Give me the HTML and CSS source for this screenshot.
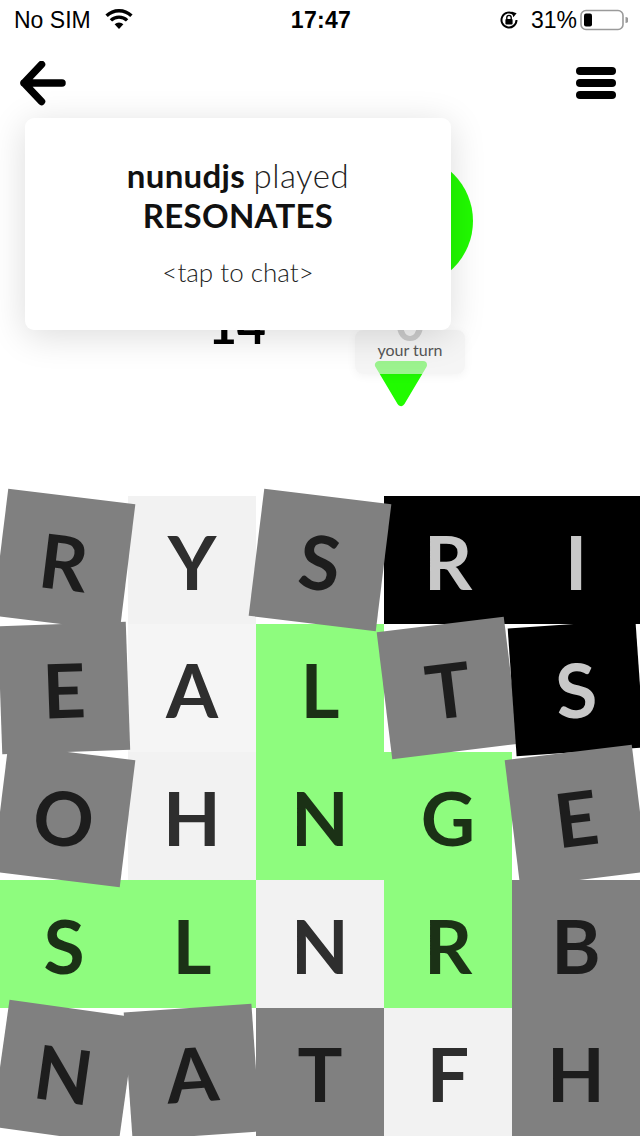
FILE: index.html
```html
<!DOCTYPE html>
<html lang="en">
<head>
<meta charset="utf-8">
<title>Word game</title>
<link rel="stylesheet" href="styles.css">
</head>
<body>
<div class="screen">
  <div class="status">
    <div class="st-left">
      <span>No SIM</span>
      <svg class="wifi" width="30" height="22" viewBox="0 0 30 22">
        <path d="M15 21 L10.6 16.2 A6.5 6.5 0 0 1 19.4 16.2 Z" fill="#000"/>
        <path d="M6.9 12.4 A11.6 11.6 0 0 1 23.1 12.4" fill="none" stroke="#000" stroke-width="3.4"/>
        <path d="M2.6 7.8 A17.6 17.6 0 0 1 27.4 7.8" fill="none" stroke="#000" stroke-width="3.4"/>
      </svg>
    </div>
    <div class="st-time">17:47</div>
    <div class="st-right">
      <svg class="rotlock" width="22" height="22" viewBox="0 0 22 22">
        <path d="M18.5 11 A7.5 7.5 0 1 1 15.8 5.2" fill="none" stroke="#000" stroke-width="2"/>
        <path d="M13.6 2.6 L18.6 4.2 L15.4 8.2 Z" fill="#000"/>
        <rect x="7.4" y="10" width="7.2" height="5.6" rx="1" fill="#000"/>
        <path d="M8.8 10 V8.6 A2.2 2.2 0 0 1 13.2 8.6 V10" fill="none" stroke="#000" stroke-width="1.4"/>
      </svg>
      <span class="pct">31%</span>
      <svg class="battery" width="48" height="22" viewBox="0 0 48 22">
        <rect x="1" y="1.5" width="42" height="19" rx="5" fill="none" stroke="#9a9a9a" stroke-width="1.6"/>
        <rect x="4" y="4.5" width="8" height="13" rx="2" fill="#000"/>
        <path d="M45.5 8 A3 3 0 0 1 45.5 14 Z" fill="#9a9a9a"/>
      </svg>
    </div>
  </div>

  <div class="nav">
    <svg class="back" width="50" height="46" viewBox="0 0 50 46">
      <path d="M43 22 H5 M22.5 3.5 L5 22 L22.5 40.5" fill="none" stroke="#000" stroke-width="7.5" stroke-linecap="round" stroke-linejoin="round"/>
    </svg>
    <div class="menu">
      <span class="bar"></span>
      <span class="bar"></span>
      <span class="bar"></span>
    </div>
  </div>

  <div class="players">
    <div class="player">
      <div class="avatar avatar-one"></div>
      <div class="score">14</div>
    </div>
    <div class="player">
      <div class="avatar avatar-two"></div>
      <div class="score score-idle">0</div>
      <div class="turnbox">
        <div class="turn-label">your turn</div>
      </div>
      <svg class="marker" width="54" height="47" viewBox="0 0 54 47">
        <path d="M5 5 H49 L27 42 Z" fill="#21fb00" stroke="#21fb00" stroke-width="8" stroke-linejoin="round"/>
      </svg>
    </div>
  </div>

  <div class="board">
    <div class="tile gray rot-cw7">R</div>
    <div class="tile light">Y</div>
    <div class="tile gray rot-cw7">S</div>
    <div class="tile black">R</div>
    <div class="tile black">I</div>

    <div class="tile gray rot-ccw2">E</div>
    <div class="tile light lighter">A</div>
    <div class="tile green">L</div>
    <div class="tile gray rot-ccw7">T</div>
    <div class="tile black rot-ccw4">S</div>

    <div class="tile gray rot-cw7">O</div>
    <div class="tile light">H</div>
    <div class="tile green">N</div>
    <div class="tile green">G</div>
    <div class="tile gray rot-ccw7">E</div>

    <div class="tile green">S</div>
    <div class="tile green">L</div>
    <div class="tile light">N</div>
    <div class="tile green">R</div>
    <div class="tile gray">B</div>

    <div class="tile gray rot-cw8">N</div>
    <div class="tile gray rot-ccw4">A</div>
    <div class="tile gray">T</div>
    <div class="tile light">F</div>
    <div class="tile gray">H</div>
  </div>

  <div class="toast">
    <div class="toast-line"><b>nunudjs</b> <span class="thin">played</span></div>
    <div class="toast-line"><b>RESONATES</b></div>
    <div class="toast-hint">&lt;tap to chat&gt;</div>
  </div>
</div>
</body>
</html>
```

FILE: styles.css
```css
* { box-sizing: border-box; }

html, body {
  margin: 0;
  padding: 0;
  background: #fff;
}

.screen {
  position: relative;
  width: 640px;
  height: 1136px;
  overflow: hidden;
  display: flex;
  flex-direction: column;
  font-family: "Lato", "Open Sans", sans-serif;
  color: #000;
}

/* status bar */
.status {
  height: 40px;
  display: grid;
  grid-template-columns: 1fr auto 1fr;
  align-items: center;
  padding: 0 12px 0 14px;
  font-family: "Liberation Sans", Arial, sans-serif;
  font-size: 23px;
}
.st-left {
  display: flex;
  align-items: center;
  gap: 13px;
}
.wifi { margin-top: -2px; }
.st-time {
  font-weight: 700;
  font-size: 23px;
  letter-spacing: 0.3px;
}
.st-right {
  display: flex;
  align-items: center;
  justify-content: flex-end;
}
.rotlock { margin-right: 11px; }
.pct { margin-right: 3px; }

/* nav */
.nav {
  height: 88px;
  display: flex;
  align-items: center;
  justify-content: space-between;
  padding: 0 24px 0 19px;
}
.menu {
  display: flex;
  flex-direction: column;
  gap: 4px;
  margin-top: -2px;
}
.bar {
  display: block;
  width: 40px;
  height: 8px;
  border-radius: 4px;
  background: #000;
}

/* players */
.players {
  display: grid;
  grid-template-columns: 150px 150px;
  column-gap: 23px;
  padding-left: 162px;
  padding-top: 27px;
}
.player {
  display: flex;
  flex-direction: column;
  align-items: center;
}
.avatar {
  width: 132px;
  height: 132px;
  border-radius: 50%;
}
.avatar-one { background: #e8e8e8; }
.avatar-two { background: #21fb00; margin-left: -6px; }
.score {
  margin-top: 13px;
  font-size: 50px;
  line-height: 50px;
  font-weight: 700;
  color: #000;
}
.score-idle {
  margin-top: 17px;
  line-height: 36px;
  color: #9b9b9b;
}
.turnbox {
  position: relative;
  z-index: 1;
  margin-top: -10px;
  width: 110px;
  padding: 12px 0 16px;
  border-radius: 8px;
  background: rgba(238, 238, 238, 0.6);
  box-shadow: 0 2px 10px rgba(0, 0, 0, 0.05);
  text-align: center;
}
.turn-label {
  font-size: 16px;
  line-height: 16px;
  color: #555;
}
.marker {
  margin-top: -14px;
  margin-right: 18px;
}

/* board */
.board {
  margin-top: auto;
  display: grid;
  grid-template-columns: repeat(5, 128px);
  grid-template-rows: repeat(5, 128px);
}
.tile {
  display: flex;
  align-items: center;
  justify-content: center;
  font-family: "Lato", sans-serif;
  font-weight: 700;
  font-size: 75px;
  line-height: 1;
  padding-top: 2px;
}
.gray { background: #808080; color: #1d1d1d; }
.light { background: #f2f2f2; color: #2e2e2e; }
.lighter { background: #f5f5f5; }
.green { background: #8efc7e; color: #1b3116; }
.black { background: #000; color: #c8c8c8; }

.rot-cw7 { transform: rotate(7deg); }
.rot-cw8 { transform: rotate(8deg); }
.rot-ccw2 { transform: rotate(-2deg); }
.rot-ccw4 { transform: rotate(-4deg); }
.rot-ccw7 { transform: rotate(-7deg); }

/* toast overlay */
.toast {
  position: absolute;
  left: 25px;
  top: 118px;
  width: 426px;
  height: 212px;
  z-index: 5;
  background: #fff;
  border-radius: 9px;
  box-shadow: 0 6px 36px rgba(0, 0, 0, 0.14);
  padding-top: 37px;
  text-align: center;
  color: #111;
}
.toast-line {
  font-size: 33px;
  line-height: 40px;
}
.toast-line b {
  font-weight: 700;
  letter-spacing: 0.3px;
}
.thin {
  font-weight: 300;
  color: #222;
  letter-spacing: 0.5px;
}
.toast-hint {
  margin-top: 22px;
  font-size: 26px;
  line-height: 30px;
  font-weight: 300;
  color: #222;
}
```
